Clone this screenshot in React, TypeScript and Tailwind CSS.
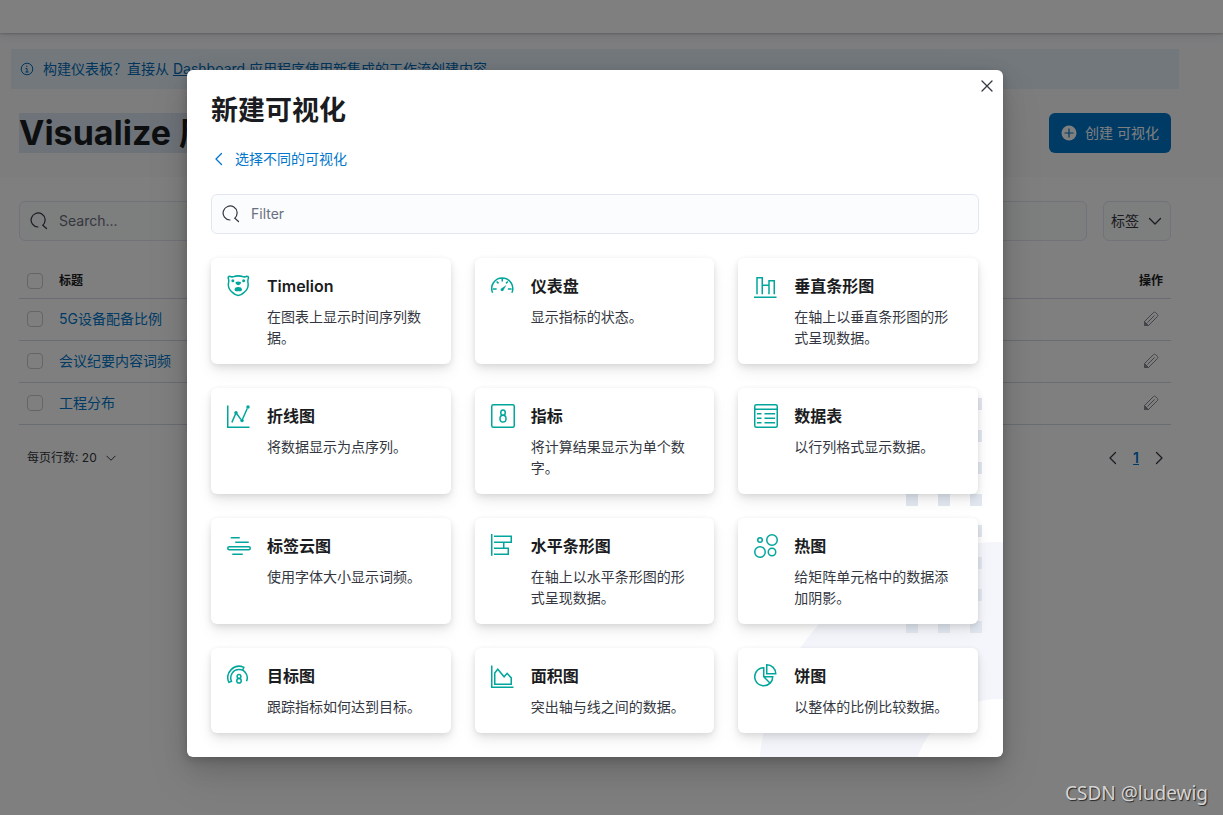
import type { ReactNode } from "react";

const FONT = "font-['Inter','Noto_Sans_CJK_SC',sans-serif]";

type VisType = { title: string; description: string; icon: ReactNode };

const visTypes: VisType[] = [
  {
    title: "Timelion",
    description: "在图表上显示时间序列数据。",
    icon: (
      <>
        <path d="M1.500 5Q1.500 3 3.500 3 5.500 4 8 3.800 15 1.200 22 3.800q2.500.2 4.500-.8 2.200 0 2.200 2-1.500 4-.6 7.500c.6 5-1.900 9.500-5.700 12.300Q19 28.200 15 28.800 11 28.200 7.600 24.800C3.800 22 1.300 17.500 1.900 12.500 2.800 9 3 8.500 1.500 5Z" />
        <g fill="currentColor" stroke="none">
          <circle cx="7.800" cy="9" r="2" />
          <circle cx="22.200" cy="9" r="2" />
          <path d="M11.500 10.800q3.500-1.600 7 0v1.700q-1.800 2.400-3.500 2.400t-3.500-2.400ZM10 20.500q.6-3.300 5-3.300t5 3.300q-.5 2.500-2.200 2.500h-5.600q-1.700 0-2.200-2.500Z" />
        </g>
      </>
    ),
  },
  {
    title: "仪表盘",
    description: "显示指标的状态。",
    icon: (
      <>
        <path d="M2.200 25A14 14 0 1 1 27.800 25M15 5v5M7.500 10l2.500 2.500M2.500 20h5M27.500 20h-5M20 12.500l2.500-2.500" />
        <path d="M13.200 19.500 20.500 14.500 16.500 22A2 2 0 1 1 13.200 19.500Z" fill="currentColor" stroke="none" />
      </>
    ),
  },
  {
    title: "垂直条形图",
    description: "在轴上以垂直条形图的形式呈现数据。",
    icon: <path d="M4 27V5h7v22M11 15h9M20 27V9h7v18M0 31h30" />,
  },
  {
    title: "折线图",
    description: "将数据显示为点序列。",
    icon: (
      <>
        <path d="M1 2v29h29M6.500 24.500 11.500 13M13 13l5.500 7.500M20.800 20 27 6" />
        <g fill="currentColor" stroke="none">
          <circle cx="12" cy="11.500" r="2.300" />
          <circle cx="20" cy="22" r="2.300" />
          <circle cx="28" cy="4" r="2.300" />
        </g>
      </>
    ),
  },
  {
    title: "指标",
    description: "将计算结果显示为单个数字。",
    icon: (
      <>
        <rect x="1" y="1" width="30" height="30" rx="2" />
        <ellipse cx="16" cy="11.500" rx="3" ry="3.500" />
        <ellipse cx="16" cy="19.500" rx="4" ry="4.500" />
      </>
    ),
  },
  {
    title: "数据表",
    description: "以行列格式显示数据。",
    icon: (
      <>
        <rect x="1" y="1" width="30" height="30" rx="2" />
        <path d="M1 7h30M4 13h6M4 19h6M4 25h6M14 13h14M14 19h14M14 25h14" />
      </>
    ),
  },
  {
    title: "标签云图",
    description: "使用字体大小显示词频。",
    icon: (
      <>
        <path d="M5 5h12M11 11h18M7 27h14" />
        <rect x="1" y="17" width="30" height="4" rx="2" />
      </>
    ),
  },
  {
    title: "水平条形图",
    description: "在轴上以水平条形图的形式呈现数据。",
    icon: <path d="M1 0v29M4 3h23v8H4M17 11v8M4 19h19v8H4" />,
  },
  {
    title: "热图",
    description: "给矩阵单元格中的数据添加阴影。",
    icon: (
      <>
        <circle cx="8" cy="8" r="3" />
        <circle cx="24" cy="8" r="7" />
        <circle cx="8" cy="24" r="7" />
        <circle cx="24" cy="24" r="5" />
      </>
    ),
  },
  {
    title: "目标图",
    description: "跟踪指标如何达到目标。",
    icon: (
      <>
        <path d="M26 23A11 11 0 1 0 6 23L2.600 24.500A15 15 0 0 1 22.500 4.500L21 8" />
        <ellipse cx="16" cy="16.500" rx="2.500" ry="2.600" />
        <ellipse cx="16" cy="22.300" rx="3" ry="3.100" />
      </>
    ),
  },
  {
    title: "面积图",
    description: "突出轴与线之间的数据。",
    icon: <path d="M1 2v29h29M5 27V12l4-5 8.500 10 4-4.500 5.500 6V27Z" />,
  },
  {
    title: "饼图",
    description: "以整体的比例比较数据。",
    icon: (
      <path d="M13 5A12 12 0 1 0 21.500 25.500L13 17ZM13 17h12q0 5-3.500 8.500M17 1v12h12A12 12 0 0 0 17 1Z" />
    ),
  },
];

const savedItems = ["5G设备配备比例", "会议纪要内容词频", "工程分布"];

function Chevron({ d, className = "size-4" }: { d: string; className?: string }) {
  return (
    <svg viewBox="0 0 16 16" className={`${className} shrink-0`} fill="none" stroke="currentColor" strokeWidth="1.300" strokeLinecap="round" strokeLinejoin="round" aria-hidden="true">
      <path d={d} />
    </svg>
  );
}

const LEFT = "M10.500 2.500 5 8l5.500 5.500";
const RIGHT = "M5.500 2.500 11 8l-5.500 5.500";
const DOWN = "M2.500 5.500 8 11l5.500-5.500";

function SearchIcon() {
  return (
    <svg viewBox="0 0 18 18" className="size-[18px] shrink-0 text-[#343741]" fill="none" stroke="currentColor" strokeWidth="1.200" strokeLinecap="round" aria-hidden="true">
      <path d="M8 15A7 7 0 1 1 12.800 13.200L16.500 16.500" />
    </svg>
  );
}

function PencilIcon() {
  return (
    <svg viewBox="0 0 16 16" className="size-4" fill="none" stroke="currentColor" strokeLinejoin="round" aria-hidden="true">
      <path d="M1.500 14.500v-4L10.500 1.500q1-.8 2 0l2 2q.8 1 0 2l-9 9ZM4.500 11.500l7-7" />
      <path d="M1.500 10.500v4h4Z" fill="currentColor" />
    </svg>
  );
}

function Tick({ label }: { label: string }) {
  return (
    <input
      type="checkbox"
      aria-label={label}
      className="block size-4 appearance-none rounded border border-[#c9cbcd] bg-white"
    />
  );
}

function LibraryPage() {
  return (
    <div className="min-h-screen bg-white text-[#343741]">
      <header className="relative h-[33px] bg-white shadow-[0_1px_2px_rgba(0,0,0,0.2),0_2px_12px_rgba(0,0,0,0.1)]" />
      <section className="bg-[#fafbfd] pt-4 pr-11 pb-6 pl-[11px]">
        <div className="flex h-10 items-center gap-2 bg-[#e6f1fa] px-2 text-sm text-[#006bb8]">
          <svg viewBox="0 0 16 16" className="size-4 shrink-0" fill="none" stroke="currentColor" aria-hidden="true">
            <circle cx="8" cy="8" r="5.800" />
            <path d="M6.500 7.500H8V11M6.300 11h3.400M7.800 4.800v1.200" />
          </svg>
          <p>
            构建仪表板？直接从{" "}
            <a href="#dashboard" className="underline">
              Dashboard
            </a>{" "}
            应用程序使用新集成的工作流创建内容
          </p>
        </div>
        <div className="mt-6 flex h-10 items-center justify-between px-2">
          <h1 className="bg-[#dce5f2] text-[34px] leading-10 font-bold text-[#1a1c21]">Visualize 库</h1>
          <button type="button" className="flex h-10 items-center gap-2 rounded-md bg-[#0077cc] px-3 text-sm text-white">
            <svg viewBox="0 0 16 16" className="size-4" aria-hidden="true">
              <circle cx="8" cy="8" r="7.500" fill="currentColor" />
              <path d="M8 3.500v9M3.500 8h9" stroke="#0077cc" strokeWidth="1.200" />
            </svg>
            创建 可视化
          </button>
        </div>
      </section>
      <section className="pt-6 pr-[52px] pl-[19px]">
        <div className="flex gap-4">
          <label className="flex h-10 flex-1 items-center gap-[11px] rounded-md border border-[#e3e6f1] bg-[#fbfcfd] px-[10px]">
            <SearchIcon />
            <input type="search" aria-label="Search" placeholder="Search..." className="w-full bg-transparent text-sm outline-none placeholder:text-[#69707d]" />
          </label>
          <button type="button" className="flex h-10 items-center gap-2 rounded-md border border-[#e3e6f1] bg-[#fbfcfd] px-[7px] text-sm">
            标签
            <Chevron d={DOWN} />
          </button>
        </div>
        <table className="mt-6 w-full border-collapse text-sm">
          <thead>
            <tr className="h-[33px] border-b border-[#d3dae6] text-xs text-[#1a1c21]">
              <th className="w-10 pl-2">
                <Tick label="全选" />
              </th>
              <th className="text-left font-semibold">标题</th>
              <th className="pr-2 text-right font-semibold">操作</th>
            </tr>
          </thead>
          <tbody>
            {savedItems.map((name) => (
              <tr key={name} className="h-[42px] border-b border-[#d3dae6]">
                <td className="pl-2">
                  <Tick label={name} />
                </td>
                <td>
                  <a href="#item" className="text-[#0077cc]">
                    {name}
                  </a>
                </td>
                <td className="pr-3">
                  <button type="button" aria-label="编辑" className="ml-auto block text-[#868b95]">
                    <PencilIcon />
                  </button>
                </td>
              </tr>
            ))}
          </tbody>
        </table>
        <div className="mt-[17px] flex h-8 items-center justify-between px-1">
          <button type="button" className="flex items-center gap-2 px-1 text-xs">
            每页行数: 20
            <Chevron d={DOWN} className="size-3" />
          </button>
          <nav className="flex items-center gap-3" aria-label="分页">
            <button type="button" aria-label="上一页">
              <Chevron d={LEFT} />
            </button>
            <a href="#page-1" className="text-sm font-semibold text-[#0077cc] underline">
              1
            </a>
            <button type="button" aria-label="下一页">
              <Chevron d={RIGHT} />
            </button>
          </nav>
        </div>
      </section>
    </div>
  );
}

const windowRows = [0, 32, 64, 96, 127, 159, 191, 223];
const windowColumns = [146, 178, 210];

function Illustration() {
  return (
    <svg viewBox="0 0 243 359" className="absolute right-0 bottom-0 h-[359px] w-[243px]" aria-hidden="true">
      <path d="M-2 387A243 243 0 0 1 241 144h2V301h-2A86 86 0 0 0 153 387Z" fill="#f4f6fb" />
      {windowRows.map((y) =>
        windowColumns.map((x) => <rect key={`${x}-${y}`} x={x} y={y} width="12" height="12" fill="#e2e7f0" />),
      )}
    </svg>
  );
}

function VisCard({ title, description, icon }: VisType) {
  return (
    <button
      type="button"
      className="flex items-start gap-4 rounded-md bg-white p-4 text-left shadow-[0_1px_5px_rgba(0,0,0,0.06),0_4px_8px_rgba(0,0,0,0.07),0_8px_16px_rgba(0,0,0,0.06)]"
    >
      <svg viewBox="0 0 32 32" className="size-6 shrink-0 text-[#00a69b]" fill="none" stroke="currentColor" strokeWidth="2" aria-hidden="true">
        {icon}
      </svg>
      <span className="block">
        <span className="block text-base leading-6 font-semibold text-[#1a1c21]">{title}</span>
        <span className="mt-2 block text-sm leading-[21px] text-[#343741]">{description}</span>
      </span>
    </button>
  );
}

function NewVisModal() {
  return (
    <div
      role="dialog"
      aria-label="新建可视化"
      className="relative w-full max-w-[816px] overflow-hidden rounded-md bg-white p-6 shadow-[0_3px_9px_rgba(0,0,0,0.16),0_9px_24px_rgba(0,0,0,0.12),0_20px_44px_rgba(0,0,0,0.1)]"
    >
      <Illustration />
      <button type="button" aria-label="关闭" className="absolute top-2 right-2 text-[#343741]">
        <Chevron d="M3 3l10 10M13 3 3 13" />
      </button>
      <div className="relative">
        <h2 className="text-[27px] leading-[34px] font-bold text-[#1a1c21]">新建可视化</h2>
        <button type="button" className="mt-[19px] flex h-6 items-center gap-2 text-sm text-[#0077cc]">
          <Chevron d={LEFT} />
          选择不同的可视化
        </button>
        <label className="mt-[23px] flex h-10 items-center gap-[11px] rounded-md border border-[#e3e6f1] bg-[#fbfcfe] px-[10px]">
          <SearchIcon />
          <input type="search" aria-label="Filter" placeholder="Filter" className="w-full bg-transparent text-sm outline-none placeholder:text-[#69707d]" />
        </label>
        <div className="mt-6 grid grid-cols-3 gap-6 pr-px">
          {visTypes.map((vis) => (
            <VisCard key={vis.title} {...vis} />
          ))}
        </div>
      </div>
    </div>
  );
}

export default function App() {
  return (
    <div className={`relative ${FONT}`}>
      <LibraryPage />
      <div className="absolute inset-0 flex items-start justify-center bg-black/50 pt-[70px] pr-[33px]">
        <NewVisModal />
      </div>
      <p className="absolute right-[15px] bottom-2 font-['Noto_Sans',sans-serif] text-[19px] leading-7 text-[#d4d4d4] [text-shadow:1px_1px_1px_rgba(0,0,0,0.7)]">
        CSDN @ludewig
      </p>
    </div>
  );
}
